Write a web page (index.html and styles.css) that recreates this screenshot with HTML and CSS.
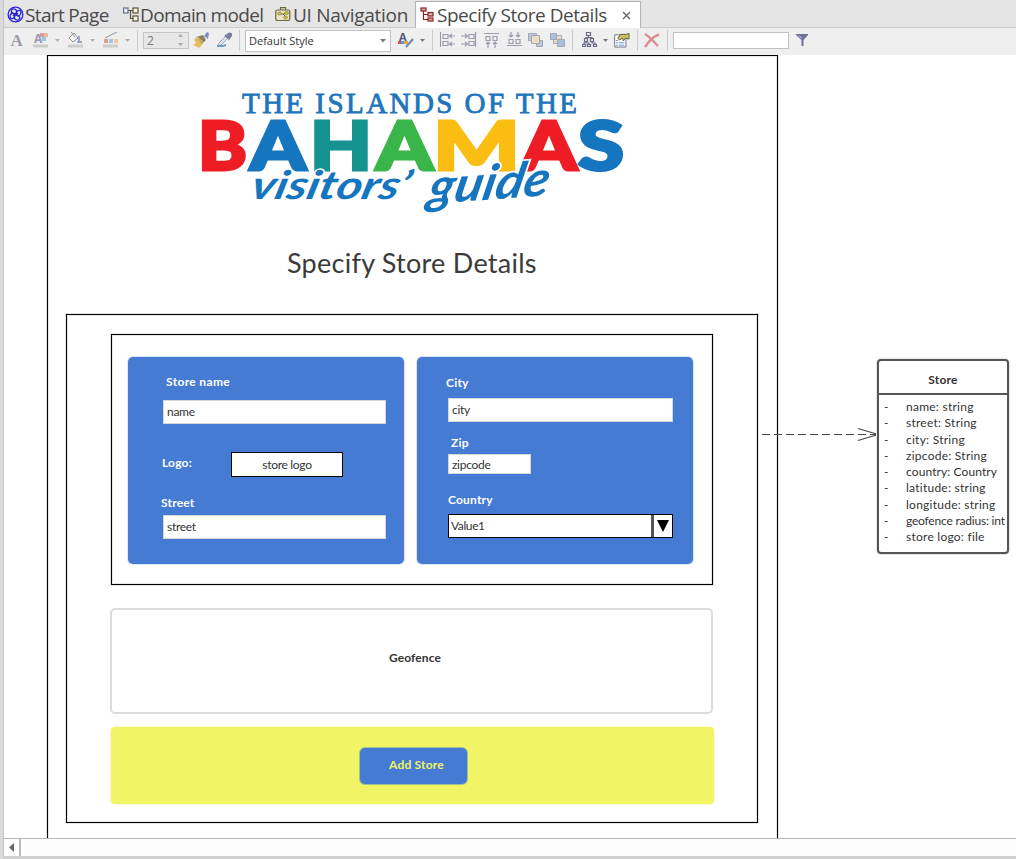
FILE: index.html
```html
<!DOCTYPE html>
<html lang="en">
<head>
<meta charset="utf-8">
<title>Specify Store Details</title>
<link rel="stylesheet" href="styles.css">
</head>
<body>
<div class="app">
<nav class="tabs">
  <div class="tab tab-start">
    <svg width="18" height="18" viewBox="0 0 18 18" fill="none" stroke="#2b25d8"><circle cx="8.500" cy="8.500" r="7.400" stroke-width="1.300"/><g stroke-width="1.300" transform="rotate(20 8.500 8.500)"><ellipse cx="6" cy="6" rx="2.700" ry="2.200"/><ellipse cx="11" cy="6" rx="2.200" ry="2.700"/><ellipse cx="6" cy="11" rx="2.200" ry="2.700"/><ellipse cx="11" cy="11" rx="2.700" ry="2.200"/><path d="M6.500 10.500L10.500 6.500"/></g></svg>
    <span class="t-start">Start Page</span></div>
  <div class="tab tab-domain">
    <svg width="17" height="18" viewBox="0 0 17 18" fill="none" stroke="#55553c" stroke-width="1.200"><path d="M5 4.500H10 M7.500 4.500V12.500H10"/><rect x=".6" y="2" width="4.400" height="5" fill="#eef" stroke="#66708f"/><rect x="10" y="2" width="5" height="5" fill="#f6f6dc"/><rect x="10" y="10" width="5" height="5" fill="#f6f6dc"/></svg>
    <span class="t-domain">Domain model</span></div>
  <div class="tab tab-nav">
    <svg width="18" height="18" viewBox="0 0 18 18" fill="none" stroke="#6e6238" stroke-width="1.200"><path d="M5.500 4V1.600H10.500V4"/><rect x=".8" y="4" width="14" height="10.500" rx="1.500" fill="#e9e5c8"/><path d="M4 8H8L11 11M8 8L12 7" stroke-width="1"/><g fill="#cdc628" stroke-width=".5"><ellipse cx="4.500" cy="7.500" rx="2" ry="1.500"/><ellipse cx="11.500" cy="7" rx="2" ry="1.500"/><ellipse cx="10.500" cy="11.500" rx="2" ry="1.500"/></g></svg>
    <span class="t-nav">UI Navigation</span></div>
  <div class="tab tab-active">
    <svg width="17" height="18" viewBox="0 0 17 18" fill="#ddb0b0" stroke="#8a2022" stroke-width="1.200"><path fill="none" d="M3.500 4V13.500H8M3.500 8.500H8"/><rect x="1" y="2" width="5" height="3"/><rect x="8" y="6.500" width="5" height="3.500"/><rect x="8" y="12" width="5" height="3"/></svg>
    <span class="t-active">Specify Store Details</span>
    <svg class="close" width="9" height="9" viewBox="0 0 9 9"><path d="M1 1L8 8M8 1L1 8" stroke="#666" stroke-width="1.400"/></svg></div>
</nav>

<div class="toolbar">
  <svg viewBox="0 0 16 16"><text x="1.500" y="13.500" class="glyph-a" font-size="17">A</text></svg>
  <svg viewBox="0 0 16 16"><text x="1" y="10.500" class="glyph-sans" font-size="12">A</text><path fill="#e09c92" d="M7 1h4v4H7z"/><path fill="#e8b99b" d="M11 1h4v4h-4z"/><path fill="#9dc3ef" d="M9 5h4v4H9z"/><path fill="#ccc" d="M0 12.500h15v3H0z"/></svg>
  <svg class="arr" viewBox="0 0 6 16"><path d="M1 7h5L3.500 10z"/></svg>
  <svg viewBox="0 0 16 16"><path fill="#f8f8f8" stroke="#8f8f98" d="M2 6L7 1l4 5-5 4z"/><path fill="none" stroke="#8f8f98" d="M4 0l4 5"/><path fill="#9aa8c6" d="M11 4h2v5h2v2h-5V9h1z"/><path fill="#ccc" d="M1 12.500h15v3H1z"/></svg>
  <svg class="arr" viewBox="0 0 6 16"><path d="M1 7h5L3.500 10z"/></svg>
  <svg viewBox="0 0 16 16"><path d="M2 6L14 0" stroke="#aaa" stroke-width="1.200"/><path fill="#e09c92" d="M1 7h4v4H1z"/><path fill="#9dc3ef" d="M6 7h4v4H6z"/><path fill="#f1c69b" d="M11 7h4v4h-4z"/><path fill="#ccc" d="M0 12.500h15v3H0z"/></svg>
  <svg class="arr" viewBox="0 0 6 16"><path d="M1 7h5L3.500 10z"/></svg>
  <i class="sep"></i>
  <div class="spin"><span>2</span><svg width="6" height="12" viewBox="0 0 6 12"><path d="M0 3h5L2.500 0zM0 9h5L2.500 12z" fill="#aaa"/></svg></div>
  <svg viewBox="0 0 16 16"><path d="M11 4l3-4 2 1-1 6z" fill="#7893c4"/><path d="M3 5l7-2 3 5-4 4z" fill="#8c8059"/><path d="M1 7l3-1 6 6-4 4-6-3 3-2z" fill="#e7bd5b"/><path d="M4 5l7 6" stroke="#f3e3a5"/></svg>
  <svg viewBox="0 0 16 16"><path d="M10 2c3-3 6-1 5 2l-3 4-5-4z" fill="#777e9c"/><path d="M8 5L2 11l-1 3 3-1 6-6" fill="#dde5ee" stroke="#9ba8bd"/><path d="M0 14h6l3-1" stroke="#6e9cca" stroke-width="2" fill="none"/></svg>
  <i class="sep"></i>
  <div class="combo"><span>Default Style</span><svg width="6" height="4" viewBox="0 0 6 4"><path d="M0 0h6L3 3.500z" fill="#777"/></svg></div>
  <svg viewBox="0 0 16 16"><text x="1" y="8.500" class="glyph-dark" font-size="11">A</text><path fill="#df5145" d="M0 9h4v3H0z"/><path fill="#459ef0" d="M3 9h3v3H3z"/><path fill="#f5a33d" d="M6 9h4v3H6z"/><path d="M15 7L8 15" stroke="#6688b7" stroke-width="2"/></svg>
  <svg class="arr dark" viewBox="0 0 6 16"><path d="M1 7h5L3.500 10z"/></svg>
  <i class="sep"></i>
  <svg class="line" viewBox="0 0 16 16"><path d="M.5 0v15M3 2.500h5v4H3zM3 9.500h5v4H3zM9 4h6M12 2l-2.500 2L12 6M9 12h6M12 10l-2.500 2 2.500 2"/></svg>
  <svg class="line" viewBox="0 0 16 16"><path d="M14.500 0v15M8 2.500h5v4H8zM8 9.500h5v4H8zM0 4h6M4 2l2.500 2L4 6M0 12h6M4 10l2.500 2L4 14"/></svg>
  <svg class="line" viewBox="0 0 16 16"><path d="M0 1.500h15M2 4.500h4v4H2zM9 4.500h4v4H9zM4 16V10M2 12l2-2 2 2M11 16V10M9 12l2-2 2 2"/></svg>
  <svg class="line" viewBox="0 0 16 16"><path d="M0 13.500h15M2 7.500h4v4H2zM9 7.500h4v4H9zM4 0v5M2 3l2 2 2-2M11 0v5M9 3l2 2 2-2"/></svg>
  <svg viewBox="0 0 16 16" stroke="#a3a7b3"><path fill="#b6c9df" d="M.5 1.500h8v7h-8zM8.500 8.500h6v6h-6z"/><path fill="#ecdcc0" d="M3.500 3.500h8v8h-8z"/></svg>
  <svg viewBox="0 0 16 16" stroke="#a3a7b3"><path fill="#ecdcc0" d="M3.500 3.500h8v8h-8z"/><path fill="#a9bfd9" d="M.5 1.500h6v6h-6zM7.500 7.500h7v7h-7z"/></svg>
  <i class="sep"></i>
  <svg class="line strong" viewBox="0 0 16 16"><path d="M4.500.5h4v3h-4zM2.500 6.500h3v3h-3zM8.500 6.500h3v3h-3zM.5 12.500h3v2h-3zM5.500 12.500h3v2h-3zM11.500 12.500h3v2h-3zM6.500 4v1.500M4 6.500v-1h6v1M4 10v1H2v1.500M4 11h3v1.500M10 10v1h3v1.500"/></svg>
  <svg class="arr dark" viewBox="0 0 6 16"><path d="M1 7h5L3.500 10z"/></svg>
  <svg viewBox="0 0 17 16"><path fill="#fff" stroke="#6d7387" d="M.7 2.500h12v13H.7z"/><path d="M2 8.500h2M2 11h2M2 13.500h2M5 11h6M5 13.500h6" stroke="#5d87be"/><path d="M4 6l3-4h6l3-1v6l-4-1-2 3-1-3-3 2z" fill="#c9c163" stroke="#545236" stroke-width=".9"/></svg>
  <i class="sep"></i>
  <svg viewBox="0 0 16 16"><path d="M1 2c5 3 8 7 13 12M15 2.500C10 4 5 9 1 15" stroke="#d99090" stroke-width="2.400" fill="none"/></svg>
  <i class="sep"></i>
  <div class="search"></div>
  <svg viewBox="0 0 16 16"><path d="M0 2h12v1L7.500 8v6h-2V8L0 3z" fill="#6d6f94"/><path d="M3 3.500l3 3" stroke="#ddd"/></svg>
</div>

<main class="canvas">
  <section class="screen">
    <svg class="logo" width="440" height="140" viewBox="190 80 440 140">
      <text class="islands" x="242" y="112.500" textLength="335" lengthAdjust="spacing">THE ISLANDS OF THE</text>
      <g class="bahamas">
        <text x="198" y="169.500" fill="#ee1d25" stroke="#ee1d25" textLength="49" lengthAdjust="spacingAndGlyphs">B</text>
        <text x="250" y="169.500" fill="#1675bf" stroke="#1675bf" textLength="56" lengthAdjust="spacingAndGlyphs">A</text>
        <text x="310" y="169.500" fill="#159390" stroke="#159390" textLength="62" lengthAdjust="spacingAndGlyphs">H</text>
        <text x="376" y="169.500" fill="#3ab549" stroke="#3ab549" textLength="57" lengthAdjust="spacingAndGlyphs">A</text>
        <text x="433" y="169.500" fill="#fcbd13" stroke="#fcbd13" textLength="87" lengthAdjust="spacingAndGlyphs">M</text>
        <text x="521" y="169.500" fill="#ee1d25" stroke="#ee1d25" textLength="56" lengthAdjust="spacingAndGlyphs">A</text>
        <text x="578" y="169.500" fill="#1675bf" stroke="#1675bf" textLength="46" lengthAdjust="spacingAndGlyphs">S</text>
      </g>
      <g class="script">
        <text transform="translate(249 199) skewX(-14) scale(1 1.100)" textLength="158" lengthAdjust="spacingAndGlyphs">visitors’</text>
        <text transform="translate(426 204) rotate(-4) skewX(-16) scale(1 1.350)" textLength="121" lengthAdjust="spacingAndGlyphs">guide</text>
      </g>
    </svg>
    <h1>Specify Store Details</h1>
    <div class="body-frame">
      <div class="form-frame">
        <div class="panel panel-left">
          <label class="l-name">Store name</label>
          <div class="field">name</div>
          <div class="logo-row"><label>Logo:</label><div class="file">store logo</div></div>
          <label class="l-street">Street</label>
          <div class="field">street</div>
        </div>
        <div class="panel panel-right">
          <label class="l-city">City</label>
          <div class="field">city</div>
          <label class="l-zip">Zip</label>
          <div class="field zip">zipcode</div>
          <label class="l-country">Country</label>
          <div class="select"><span>Value1</span><b><svg width="12" height="12" viewBox="0 0 12 12"><path d="M0 0h12L6 12z"/></svg></b></div>
        </div>
      </div>
      <div class="geofence">Geofence</div>
      <div class="actions"><div class="add">Add Store</div></div>
    </div>
  </section>

  <svg class="connector" width="120" height="16" viewBox="0 0 120 16" fill="none" stroke="#4a4a4a" stroke-width="1.200"><path d="M0 8.500H116" stroke-dasharray="8 4"/><path d="M96 2.500L116 8.500 96 14.500"/></svg>

  <section class="entity">
    <h2>Store</h2>
    <ul>
      <li><i>-</i><span>name: string</span></li>
      <li><i>-</i><span>street: String</span></li>
      <li><i>-</i><span>city: String</span></li>
      <li><i>-</i><span>zipcode: String</span></li>
      <li><i>-</i><span class="country">country: Country</span></li>
      <li><i>-</i><span>latitude: string</span></li>
      <li><i>-</i><span>longitude: string</span></li>
      <li><i>-</i><span class="tight">geofence radius: int</span></li>
      <li><i>-</i><span>store logo: file</span></li>
    </ul>
  </section>
</main>
<div class="scroll"><div class="scroll-btn"><svg width="5" height="9" viewBox="0 0 5 9"><path d="M5 0v9L0 4.500z" fill="#666"/></svg></div></div>
</div>
</body>
</html>
```
FILE: styles.css
```css
* { box-sizing: border-box; }
body { margin: 0; background: #f0f0f0; font-family: Lato, sans-serif; color: #333; }
svg { display: block; flex: none; }
.app { width: 1016px; height: 859px; overflow: hidden; padding-left: 3px; background: #dadada; display: flex; flex-direction: column; }
.tabs { height: 28px; flex: none; display: flex; background: #e5e5e5; border-left: 1px solid #c4c4c4; border-bottom: 1px solid #c9c9c9; font: 19px/28px "Open Sans", sans-serif; color: #4a4a4a; }
.tab { display: flex; align-items: center; height: 28px; white-space: nowrap; padding-top: 1px; }
.tab-start { width: 116px; padding-left: 3px; }
.tab-domain { width: 152px; padding-left: 3px; }
.tab-nav { width: 143px; padding-left: 3px; }
.tab-active { width: 226px; height: 28px; margin-top: 1px; padding: 0 0 1px 4px; background: #fff; border: 1px solid #b4b4b4; border-bottom: 0; }
.t-start { letter-spacing: -.65px; }
.t-domain { letter-spacing: -.62px; }
.t-nav { letter-spacing: -.28px; }
.t-active { letter-spacing: -.48px; }
.close { margin-left: auto; margin-right: 9px; }

.toolbar { height: 27px; flex: none; background: #efefef; border-left: 1px solid #c4c4c4; padding: 0 0 3px 5px; display: grid; align-items: center; grid-template-columns: 24px 21px 13px 22px 14px 21px 13px 6px 50px 24px 22px 6px 153px 21px 13px 8px 21px 23px 23px 21px 22px 22px 10px 20px 12px 23px 7px 23px 6px 123px 20px; }
.toolbar > svg { width: 16px; height: 16px; }
.toolbar > .arr { width: 6px; fill: #b0b0b0; }
.toolbar > .dark { fill: #777; }
.line { fill: none; stroke: #9d9cad; stroke-width: 1.2; }
.strong { stroke: #686889; }
.glyph-a { font-family: "Liberation Serif", serif; font-weight: bold; fill: #9b9ba9; }
.glyph-sans { font-family: "Open Sans", sans-serif; font-weight: bold; fill: #9b9bb0; }
.glyph-dark { font-family: "Open Sans", sans-serif; font-weight: bold; fill: #55587a; }
.sep { width: 1px; height: 21px; background: #ccc; }
.spin { width: 46px; height: 17px; border: 1px solid #c6c6c6; background: #e7e7e7; display: flex; align-items: center; justify-content: space-between; padding: 0 4px 0 3px; font: 12px/15px "Open Sans", sans-serif; color: #777; }
.combo { width: 146px; height: 22px; margin-top: 2px; background: #fff; border: 1px solid #c2c2c2; display: flex; align-items: center; justify-content: space-between; padding: 0 4px 0 3px; font: 11px/18px "Open Sans", sans-serif; }
.search { width: 116px; height: 17px; background: #fff; border: 1px solid #c2c2c2; }

.canvas { position: relative; flex: 1; min-height: 0; background: #fff; border-left: 1px solid #c4c4c4; overflow: hidden; }
.screen { position: absolute; left: 43px; top: 0; width: 731px; height: 790px; border: 1px solid #000; box-shadow: 0 0 0 1px #e6e6e6, inset 0 0 0 1px #e6e6e6; display: flex; flex-direction: column; }
.logo { margin: 24px 0 0 142px; }
.islands { font: 29px "Liberation Serif", serif; fill: #1d75bc; stroke: #1d75bc; stroke-width: .8px; }
.bahamas { font: 900 66px Lato, sans-serif; stroke-width: 3px; }
.script { font: italic bold 36px Lato, sans-serif; fill: #1675bf; stroke: #fff; stroke-width: 2.5px; paint-order: stroke; }
h1 { margin: 24px 0 0 239px; height: 38px; font: 400 27px/38px Lato, sans-serif; letter-spacing: .26px; color: #3b3b3b; white-space: nowrap; }
.body-frame { width: 692px; height: 509px; margin: 32px 0 0 18px; border: 1px solid #000; box-shadow: 0 0 0 1px #e6e6e6, inset 0 0 0 1px #e6e6e6; padding: 19px 0 0 43px; }
.form-frame { width: 602px; height: 251px; margin-left: 1px; border: 1px solid #000; box-shadow: 0 0 0 1px #e6e6e6, inset 0 0 0 1px #e6e6e6; padding: 22px 0 0 16px; display: flex; gap: 13px; }
.panel { width: 276px; height: 207px; flex: none; border-radius: 5px; background: #467bd4; box-shadow: 0 0 0 1px #dbe5f6; display: flex; flex-direction: column; font-size: 12px; line-height: 16px; }
.panel-left { padding: 17px 0 0 35px; }
.panel-right { padding: 18px 0 0 31px; }
label { color: #fff; font-weight: bold; height: 16px; white-space: nowrap; letter-spacing: .2px; }
.field { width: 223px; height: 24px; background: #fff; border: 1px solid #d5d5d5; padding: 3px 0 0 3px; letter-spacing: -.3px; }
.l-name { margin: 0 0 10px 3px; letter-spacing: .35px; }
.logo-row { display: flex; height: 25px; margin-top: 28px; align-items: center; }
.logo-row label { width: 69px; margin-left: -1px; margin-top: -4px; }
.file { width: 112px; height: 25px; border: 1px solid #000; background: #fff; text-align: center; line-height: 23px; letter-spacing: -.3px; }
.l-street { margin: 18px 0 4px -2px; }
.panel-right .field { width: 225px; }
.l-city { margin: 0 0 7px -2px; }
.l-zip { margin: 13px 0 3px 3px; }
.panel-right .zip { width: 83px; height: 20px; padding-top: 2px; }
.l-country { margin: 18px 0 6px 0; }
.select { width: 225px; height: 24px; background: #fff; border: 1px solid #000; padding-left: 2px; display: flex; justify-content: space-between; line-height: 22px; letter-spacing: -.4px; }
.select b { width: 21px; border-left: 3px solid #555; display: flex; align-items: center; justify-content: center; }
.geofence { width: 603px; height: 106px; margin-top: 23px; border: 2px solid #dcdcdc; border-radius: 5px; text-align: center; font: bold 12px/96px Lato, sans-serif; letter-spacing: .1px; padding-left: 7px; color: #333; }
.actions { width: 603px; height: 77px; margin: 13px 0 0 1px; border-radius: 4px; background: #f1f465; padding: 21px 0 0 249px; box-shadow: 0 0 0 1px #fafbd4; }
.add { width: 107px; height: 36px; border-radius: 5px; background: #467bd4; box-shadow: 0 0 0 1px #a3be95; color: #f1f465; font: bold 12px/34px Lato, sans-serif; letter-spacing: .2px; text-align: center; padding-left: 6px; }
.connector { position: absolute; left: 758px; top: 371px; }
.entity { position: absolute; left: 873px; top: 304px; width: 132px; height: 195px; border: 2px solid #555; border-radius: 4px; background: #fff; font-size: 12px; color: #333; box-shadow: 0 0 0 1px #e6e6e6; }
h2 { height: 34px; margin: 0; border-bottom: 2px solid #555; text-align: center; font: bold 12px/38px Lato, sans-serif; letter-spacing: .2px; }
ul { margin: 0; padding: 4px 0 0 5px; list-style: none; }
li { display: flex; height: 16.25px; line-height: 16px; white-space: nowrap; letter-spacing: .25px; }
li i { width: 22px; flex: none; font-style: normal; }
.country { letter-spacing: .1px; }
.tight { letter-spacing: -.2px; }
.scroll { height: 21px; flex: none; background: #fdfdfd; border-top: 1px solid #b8b8b8; border-left: 1px solid #c4c4c4; border-bottom: 3px solid #d0d0d0; }
.scroll-btn { width: 17px; height: 17px; border-right: 2px solid #bbb; display: flex; align-items: center; justify-content: center; }
```
